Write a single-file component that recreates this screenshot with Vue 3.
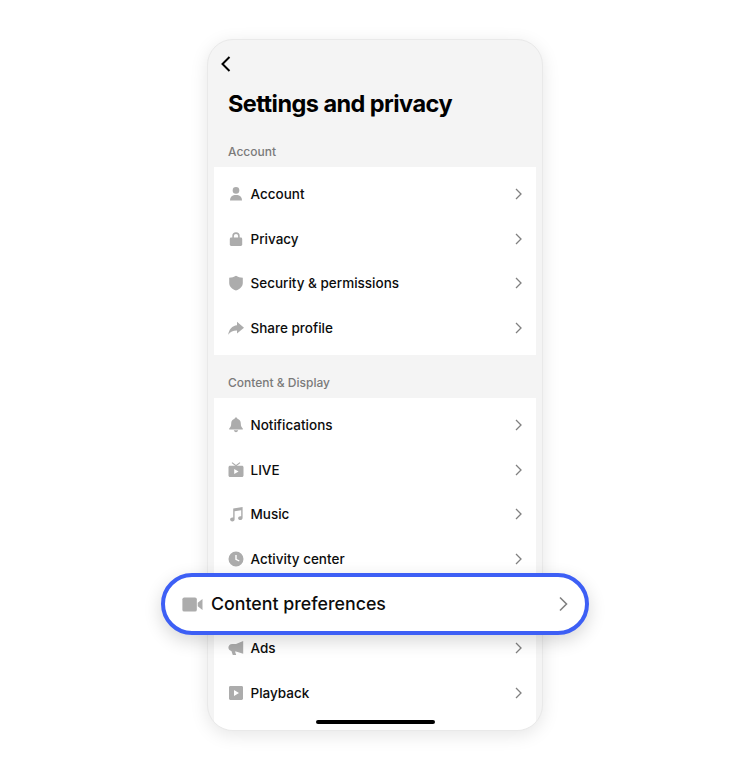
<script setup>
const accountRows = [
  { label: "Account", icon: "user" },
  { label: "Privacy", icon: "lock" },
  { label: "Security & permissions", icon: "shield" },
  { label: "Share profile", icon: "share" },
];

// the fifth row sits under the highlight pill, which carries its label
const displayRows = [
  { label: "Notifications", icon: "bell" },
  { label: "LIVE", icon: "tv" },
  { label: "Music", icon: "music" },
  { label: "Activity center", icon: "clock" },
  { label: "", icon: "" },
  { label: "Ads", icon: "ads" },
  { label: "Playback", icon: "play" },
];
</script>

<template>
  <div class="page">
    <div class="phone">
      <div class="back">
        <svg width="12" height="18" viewBox="0 0 12 18">
          <path d="M9.5 2 L2.5 9 L9.5 16" fill="none" stroke="#000" stroke-width="2" />
        </svg>
      </div>
      <h1>Settings and privacy</h1>

      <h2 class="first">Account</h2>
      <section class="card">
        <div v-for="row in accountRows" :key="row.label" class="row">
          <svg class="icon" viewBox="0 0 16 16" width="16" height="16">
            <g v-if="row.icon === 'user'">
              <circle cx="8" cy="4.4" r="3.3" />
              <path d="M2 14.6 C2 10.8 4.4 9 8 9 C11.6 9 14 10.8 14 14.6 Z" />
            </g>
            <g v-else-if="row.icon === 'lock'">
              <path d="M4.3 7 V5 A3.7 3.7 0 0 1 11.7 5 V7 H10.1 V5 A2.1 2.1 0 0 0 5.9 5 V7 Z" />
              <rect x="1.8" y="6.5" width="12.4" height="8.5" rx="1.4" />
            </g>
            <path v-else-if="row.icon === 'shield'" d="M8 0.8 C10 2 12.2 2.6 14.8 2.8 V8 C14.8 11.6 12 14.2 8 15.6 C4 14.2 1.2 11.6 1.2 8 V2.8 C3.8 2.6 6 2 8 0.8 Z" />
            <path v-else d="M9 1.8 L16 7.8 L9 13.6 V10.4 C5.4 10.3 2.4 11.4 0.2 14.8 C0.8 9.4 4.2 5.6 9 5.2 Z" />
          </svg>
          <span class="label">{{ row.label }}</span>
          <svg class="chevron" width="8" height="12" viewBox="0 0 8 12">
            <path d="M1 1 L6 6 L1 11" fill="none" stroke="#808080" stroke-width="1.3" />
          </svg>
        </div>
      </section>

      <h2>Content &amp; Display</h2>
      <section class="card last">
        <div v-for="row in displayRows" :key="row.icon" class="row">
          <template v-if="row.label">
            <svg class="icon" viewBox="0 0 16 16" width="16" height="16">
              <path v-if="row.icon === 'bell'" d="M8 0.6 C8.7 0.6 9.3 1 9.4 1.7 C11.6 2.3 12.8 4.1 12.8 6.5 C12.8 9.2 13.5 10.4 14.8 11.4 V12.6 H1.2 V11.4 C2.5 10.4 3.2 9.2 3.2 6.5 C3.2 4.1 4.4 2.3 6.6 1.7 C6.7 1 7.3 0.6 8 0.6 Z M5.8 13.3 H10.2 C10 14.4 9.1 15.2 8 15.2 C6.9 15.2 6 14.4 5.8 13.3 Z" />
              <g v-else-if="row.icon === 'tv'">
                <path fill-rule="evenodd" d="M2 3.8 H14 C14.8 3.8 15.5 4.5 15.5 5.3 V13.6 C15.5 14.4 14.8 15.1 14 15.1 H2 C1.2 15.1 0.5 14.4 0.5 13.6 V5.3 C0.5 4.5 1.2 3.8 2 3.8 Z M6.2 7 V12 L10.6 9.5 Z" />
                <path d="M4 0.6 L8 3.8 L12 0.6" fill="none" stroke="#acacac" stroke-width="1.2" />
              </g>
              <path v-else-if="row.icon === 'music'" d="M5.2 2.6 L14.6 0.9 V12 C14.6 13.3 13.5 14.1 12.3 14.1 C11 14.1 10.1 13.3 10.1 12.2 C10.1 11 11.1 10.2 12.4 10.2 C12.7 10.2 13 10.2 13.2 10.3 V4.2 L6.6 5.3 V13.4 C6.6 14.6 5.5 15.4 4.3 15.4 C3 15.4 2.1 14.6 2.1 13.5 C2.1 12.3 3.1 11.5 4.4 11.5 C4.7 11.5 5 11.5 5.2 11.6 Z" />
              <path v-else-if="row.icon === 'clock'" fill-rule="evenodd" d="M8 0.5 A7.5 7.5 0 1 1 8 15.5 A7.5 7.5 0 1 1 8 0.5 Z M7.3 4 V8.7 L11 10.6 L11.6 9.5 L8.7 8 V4 Z" />
              <path v-else-if="row.icon === 'ads'" d="M15.2 1 V13.8 L8 11.4 H7 L8.2 15 H4.8 L3.4 11 C1.6 10.7 0.4 9.4 0.4 7.6 C0.4 5.6 2 4 4.1 4 H8 Z" />
              <path v-else fill-rule="evenodd" d="M2.4 1 H13.6 C14.4 1 15 1.6 15 2.4 V13.6 C15 14.4 14.4 15 13.6 15 H2.4 C1.6 15 1 14.4 1 13.6 V2.4 C1 1.6 1.6 1 2.4 1 Z M6 5 V11 L11 8 Z" />
            </svg>
            <span class="label">{{ row.label }}</span>
            <svg class="chevron" width="8" height="12" viewBox="0 0 8 12">
              <path d="M1 1 L6 6 L1 11" fill="none" stroke="#808080" stroke-width="1.3" />
            </svg>
          </template>
        </div>
      </section>

      <div class="home-bar"></div>
    </div>

    <div class="highlight">
      <svg class="icon big" viewBox="0 0 16 16" width="21" height="21">
        <rect x="0.3" y="2.6" width="11" height="10.8" rx="1.4" />
        <path d="M12 6.6 L15.6 3.8 V12.2 L12 9.4 Z" />
      </svg>
      <span class="big-label">Content preferences</span>
      <svg class="chevron" width="11" height="16" viewBox="0 0 11 16">
        <path d="M2 1.5 L8.5 8 L2 14.5" fill="none" stroke="#808080" stroke-width="1.6" />
      </svg>
    </div>
  </div>
</template>

<style scoped>
.page {
  position: relative;
  width: 750px;
  height: 770px;
  padding-top: 39px;
  box-sizing: border-box;
  background: #ffffff;
  font-family: Inter, "Liberation Sans", sans-serif;
  color: #000000;
  overflow: hidden;
}

.phone {
  position: relative;
  width: 336px;
  height: 692px;
  margin-left: 207px;
  box-sizing: border-box;
  border: 1px solid #e9e9e9;
  border-radius: 26px;
  background: #f4f4f4;
  box-shadow: 0 4px 18px rgba(0, 0, 0, 0.1);
  overflow: hidden;
}

.back {
  height: 18px;
  padding: 15px 0 0 12px;
}

.back svg {
  display: block;
}

h1 {
  margin: 16px 0 0 20px;
  font-size: 23.5px;
  line-height: 30px;
  font-weight: 700;
  letter-spacing: -0.55px;
}

h2 {
  margin: 0;
  padding: 20px 0 8px 20px;
  font-size: 12px;
  line-height: 15px;
  font-weight: 500;
  color: #7a7a7a;
}

h2.first {
  padding-top: 25px;
  padding-bottom: 8px;
}

.card {
  margin: 0 6px;
  padding: 5px 0;
  background: #ffffff;
}

.card.last {
  height: 332px;
  padding-top: 4.6px;
  box-sizing: border-box;
}

.row {
  display: flex;
  align-items: center;
  height: 44.6px;
  padding: 0 13px 0 14px;
}

.icon {
  flex: none;
  fill: #acacac;
  margin-right: 6.5px;
}

.label {
  flex: 1;
  font-size: 13.5px;
  font-weight: 500;
  color: #0c0c0c;
}

.chevron {
  flex: none;
  display: block;
}

.home-bar {
  position: absolute;
  left: 108px;
  bottom: 6px;
  width: 119px;
  height: 4px;
  border-radius: 2px;
  background: #000000;
}

.highlight {
  position: absolute;
  left: 161px;
  top: 573px;
  width: 428px;
  height: 62px;
  box-sizing: border-box;
  display: flex;
  align-items: center;
  padding: 0 16px 0 17px;
  border: 4px solid #3d5ff5;
  border-radius: 31px;
  background: #ffffff;
  box-shadow: 0 6px 18px rgba(0, 0, 0, 0.16);
}

.icon.big {
  margin-right: 8px;
}

.big-label {
  flex: 1;
  padding-bottom: 2px;
  font-size: 17.8px;
  font-weight: 500;
  color: #0c0c0c;
}
</style>
